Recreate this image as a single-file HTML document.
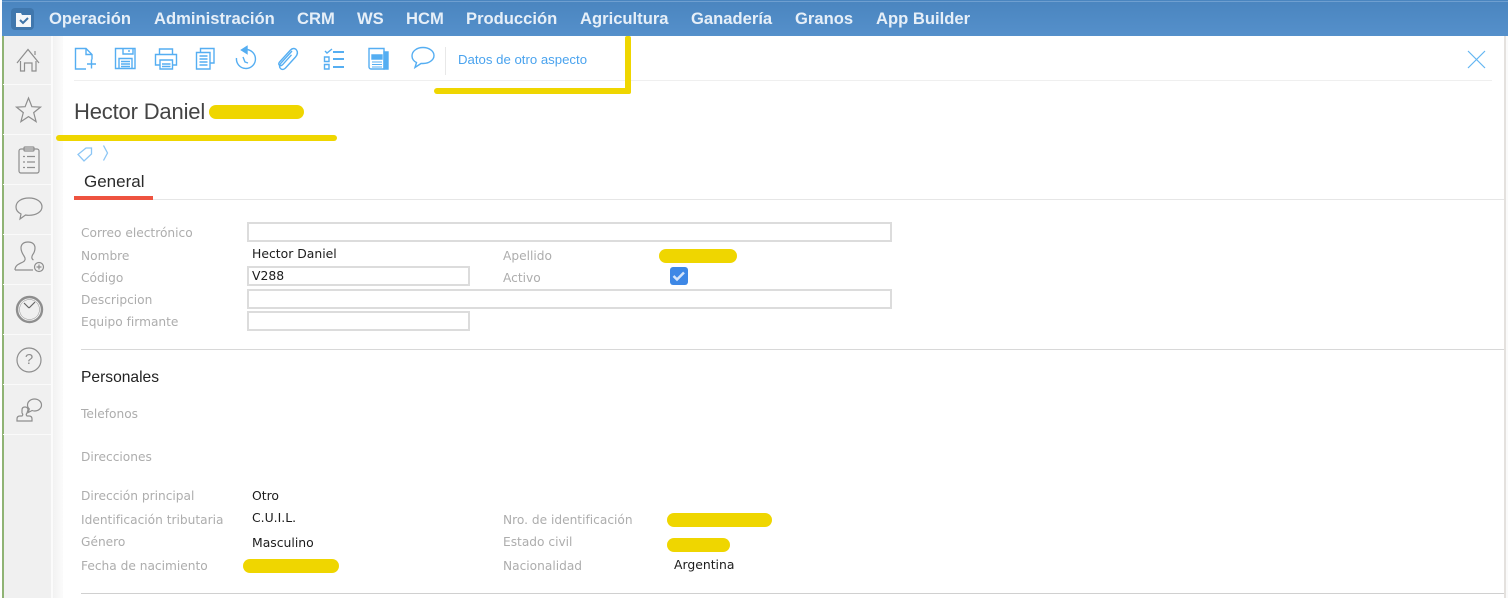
<!DOCTYPE html>
<html lang="es"><head><meta charset="utf-8"><title>Hector Daniel</title>
<style>
html,body{margin:0;padding:0;background:#fff}
#p{position:relative;width:1508px;height:598px;overflow:hidden;background:#fff;font-family:"DejaVu Sans","Liberation Sans",sans-serif;filter:blur(.3px)}
#p>*{position:absolute}
.m{top:10px;font:bold 16.6px/18px "Liberation Sans",sans-serif;color:#e6eff8;white-space:nowrap}
.l{font-size:12.2px;line-height:14px;color:#adadad;white-space:nowrap;left:81px}
.v{font-size:12.4px;line-height:14px;color:#1c1c1c;white-space:nowrap}
.i{background:#fff;border:2px solid #dcdcdc;box-sizing:border-box;left:247px}
.y{background:#efd600;border-radius:10px}
.d{left:3px;width:48px;height:1px;background:#fafafa}
svg{overflow:visible}
</style></head><body><div id="p">
<div style="left:2px;top:0;width:1506px;height:36px;background:linear-gradient(#4a85bf,#5590cb)"></div>
<div style="left:2px;top:1px;width:1506px;height:1px;background:#6f9fd0"></div>
<div style="left:2px;top:36px;width:2px;height:562px;background:#8fb374"></div>
<div style="left:4px;top:36px;width:47px;height:562px;background:#f0f0f0"></div>
<div style="left:51px;top:36px;width:2px;height:562px;background:#fbfbfb"></div>
<div style="left:53px;top:36px;width:10px;height:562px;background:linear-gradient(90deg,#f2f2f2,#fbfbfb)"></div>
<div style="left:1504px;top:36px;width:2px;height:562px;background:#e4e1de"></div>
<div style="left:1506px;top:36px;width:2px;height:562px;background:#fafafa"></div>
<div class="d" style="top:84px"></div><div class="d" style="top:134px"></div><div class="d" style="top:184px"></div><div class="d" style="top:234px"></div><div class="d" style="top:284px"></div><div class="d" style="top:334px"></div><div class="d" style="top:384px"></div><div class="d" style="top:434px"></div>

<div style="left:11px;top:8px;width:23px;height:22px;background:#4077ad;border-radius:4px"></div>
<svg style="left:16px;top:13px" width="16" height="14" viewBox="0 0 16 14"><path d="M0 0h5l1 2h9v12H0z" fill="#f4f7fa"/><path d="M4 7l3 3 5-5" fill="none" stroke="#3f74a8" stroke-width="2"/></svg>
<div class="m" style="left:49px">Operación</div>
<div class="m" style="left:154px">Administración</div>
<div class="m" style="left:297px">CRM</div>
<div class="m" style="left:357px">WS</div>
<div class="m" style="left:406px">HCM</div>
<div class="m" style="left:466px">Producción</div>
<div class="m" style="left:580px">Agricultura</div>
<div class="m" style="left:691px">Ganadería</div>
<div class="m" style="left:795px">Granos</div>
<div class="m" style="left:876px">App Builder</div>

<!-- sidebar icons -->
<svg style="left:4px;top:36px" width="48" height="400" viewBox="0 0 48 400" fill="none" stroke="#8e8e8e" stroke-width="1.200">
<path d="M13 27L24 13.500l11 13.500M16.500 25V35h4v-8h7.500v8h4V25M31 15v4"/>
<path d="M24.500 62l3.400 8.700 8.600.4-6.800 5.500 2.400 9-7.600-5-7.600 5 2.400-9-6.800-5.500 8.600-.4z"/>
<rect x="15" y="113" width="20" height="24" rx="2"/><rect x="20" y="111" width="10" height="4" rx="1"/><path d="M19 120.500h2M23 120.500h8M19 126h2M23 126h8M19 131.500h2M23 131.500h8"/>
<path d="M25 162c-7.500 0-13 3.500-13 9 0 3 2 5.500 5 7l-1 5 5.500-4c1 .2 2.200.3 3.500.3 7.500 0 13-3.500 13-8.500s-5.500-8.800-13-8.800z"/>
<path d="M11 234c0-5 4-6 8-8 2-1 3-3 1-6-2-3-3-5-3-8 0-4 3-6 7-6s7 2 7 6c0 3-1 5-2.500 7-1 2-1 4 1 5M11 234h18"/><circle cx="35" cy="231" r="4.500"/><path d="M32.500 231h5M35 228.500v5"/>
<circle cx="25.500" cy="273.500" r="12.500" stroke-width="2.400"/><circle cx="25.500" cy="273.500" r="10" stroke-width=".5"/><path d="M25 272l-5-5M25 272l6-6" stroke="#666"/>
<circle cx="25" cy="324" r="12"/>
<path d="M30.500 363c-3.900 0-7 2.700-7 6 0 1.600.7 3 1.800 4l-1 3.500 3.800-2c.7.300 1.500.500 2.400.500 3.900 0 7-2.700 7-6s-3.100-6-7-6z"/>
<path d="M18 374c0-2 1-3 3-3s3 1 3 3l-1 3c-1 1-1 2 0 3h2c2 0 3 1 3 3v2H13v-2c0-2 1-3 3-3h2c1-1 1-2 0-3z"/>
</svg>
<div style="left:23px;top:352px;width:12px;text-align:center;font:15px/16px 'Liberation Sans',sans-serif;color:#8e8e8e">?</div>

<!-- toolbar icons -->
<svg style="left:70px;top:45px" width="370" height="30" viewBox="0 0 370 30" fill="none" stroke="#55aef2" stroke-width="1.400">
<path d="M16 24H5.500V3.500H16l6 6v5M16 3.500v6h6M17 19h9M21.500 14.500v9"/>
<path d="M45.500 3.500h19.500v20H45.500zM53 3.500v5.500h10V3.500M59 5v2M49 13.500h13v10H49zM51 16.500h9M51 19h9M51 21.500h9"/>
<path d="M89.500 9V4h13v5M89.500 20h-4V9.500h21V20h-4M90 15h12.500v9H90zM92 19h8.500M92 21.500h8.500"/>
<path d="M126.500 7.500h13.500v16.500h-13.500zM130.500 7V3.500h13.500V18h-4M129.500 11h8M129.500 14h8M129.500 17h8M129.500 20h8"/>
<path d="M175.500 4.500a9.500 9.500 0 1 1-9 8.500"/><path d="M177 1.500l-5.500 3.500 5.500 3.500z" fill="#55aef2"/><path d="M173 12l2 5 3 1"/>
<path d="M222 6l-11 12c-2 2.500-2 4-.5 5.500s3.500 1 5-.5l10-11c2.500-3 2.500-5 1-7s-4-2-6 0l-11 12c-1 1.500-1 2.500 0 3.300s2 .5 3-.5l9-10"/>
<path d="M255 6l2 2 5-4M254.500 12h4.500v4.500h-4.500zM254.500 19.500h4.500V24h-4.500z"/><path d="M263 7h11M263 14h11M263 22h11" stroke-width="2"/>
<path d="M299 3.500h15v20.500h-13c-1 0-2-1-2-2z"/><path d="M314 7h4v17h-4z" fill="#55aef2"/><path d="M302 10h10v4h-10z" fill="#55aef2"/><path d="M302 17h10M302 19.500h10M302 22h10" stroke-width="1"/>
<path d="M353 2.500c-6 0-11 3.500-11 8.500 0 3 2 5.500 4.500 6.500l-1.500 5 6-4h2c6 0 11-3.500 11-8s-5-8-11-8z"/>
</svg>
<div style="left:445px;top:47px;width:1px;height:28px;background:#e8e8e8"></div>
<div style="left:458px;top:52px;font:13.2px/15px 'Liberation Sans',sans-serif;color:#4aa3ee;white-space:nowrap">Datos de otro aspecto</div>
<svg style="left:1467px;top:50px" width="19" height="19" fill="none" stroke="#62b5f3" stroke-width="1.200"><path d="M1 1l17 17M18 1L1 18"/></svg>
<div style="left:74px;top:80px;width:1418px;height:1px;background:#efefef"></div>

<!-- title -->
<div style="left:74px;top:98px;font:22px/28px 'Liberation Sans',sans-serif;color:#444;white-space:nowrap;letter-spacing:-.17px">Hector Daniel</div>
<div class="y" style="left:209px;top:105px;width:95px;height:14px"></div>
<div class="y" style="left:56px;top:135px;width:281px;height:6px"></div>
<div class="y" style="left:434px;top:88px;width:197px;height:6px"></div>
<div class="y" style="left:625px;top:36px;width:6px;height:58px;border-radius:2px"></div>

<svg style="left:76px;top:144px" width="36" height="18" fill="none" stroke="#8cc6f5" stroke-width="1.300"><path d="M2 10.500L10 4h5.500v6L8 17zM27.500 1.500L31.500 9l-4 7.500"/></svg>

<!-- tab -->
<div style="left:84px;top:173px;font:17px/18px 'Liberation Sans',sans-serif;color:#2b2b2b">General</div>
<div style="left:74px;top:196px;width:79px;height:4px;background:#ee5340"></div>
<div style="left:153px;top:199px;width:1351px;height:1px;background:#e6e6e6"></div>

<!-- General -->
<div class="l" style="top:226px">Correo electrónico</div>
<div class="i" style="top:222px;width:645px;height:20px"></div>
<div class="l" style="top:249px">Nombre</div>
<div class="v" style="left:252px;top:247px">Hector Daniel</div>
<div class="l" style="left:503px;top:249px">Apellido</div>
<div class="y" style="left:659px;top:249px;width:78px;height:14px"></div>
<div class="l" style="top:271px">Código</div>
<div class="i" style="top:266px;width:223px;height:20px"></div>
<div class="v" style="left:252px;top:269px">V288</div>
<div class="l" style="left:503px;top:271px">Activo</div>
<div style="left:670px;top:267px;width:18px;height:18px;background:#3e88e6;border-radius:3px"></div>
<svg style="left:672px;top:270px" width="14" height="12" fill="none" stroke="#d5e5fa" stroke-width="2.500"><path d="M1.500 6l3.500 3.500 7-7"/></svg>
<div class="l" style="top:293px">Descripcion</div>
<div class="i" style="top:289px;width:645px;height:20px"></div>
<div class="l" style="top:315px">Equipo firmante</div>
<div class="i" style="top:311px;width:223px;height:20px"></div>
<div style="left:81px;top:349px;width:1423px;height:1px;background:#d8d8d8"></div>

<!-- Personales -->
<div style="left:81px;top:369px;font:15.6px/18px 'Liberation Sans',sans-serif;color:#222">Personales</div>
<div class="l" style="top:407px">Telefonos</div>
<div class="l" style="top:450px">Direcciones</div>
<div class="l" style="top:489px">Dirección principal</div>
<div class="v" style="left:252px;top:489px">Otro</div>
<div class="l" style="top:513px">Identificación tributaria</div>
<div class="v" style="left:252px;top:511px">C.U.I.L.</div>
<div class="l" style="left:503px;top:513px">Nro. de identificación</div>
<div class="y" style="left:667px;top:513px;width:105px;height:14px"></div>
<div class="l" style="top:535px">Género</div>
<div class="v" style="left:252px;top:536px">Masculino</div>
<div class="l" style="left:503px;top:535px">Estado civil</div>
<div class="y" style="left:667px;top:538px;width:63px;height:14px"></div>
<div class="l" style="top:559px">Fecha de nacimiento</div>
<div class="y" style="left:243px;top:559px;width:96px;height:14px"></div>
<div class="l" style="left:503px;top:559px">Nacionalidad</div>
<div class="v" style="left:674px;top:558px">Argentina</div>
<div style="left:81px;top:593px;width:1423px;height:1px;background:#d0d0d0"></div>
</div></body></html>
